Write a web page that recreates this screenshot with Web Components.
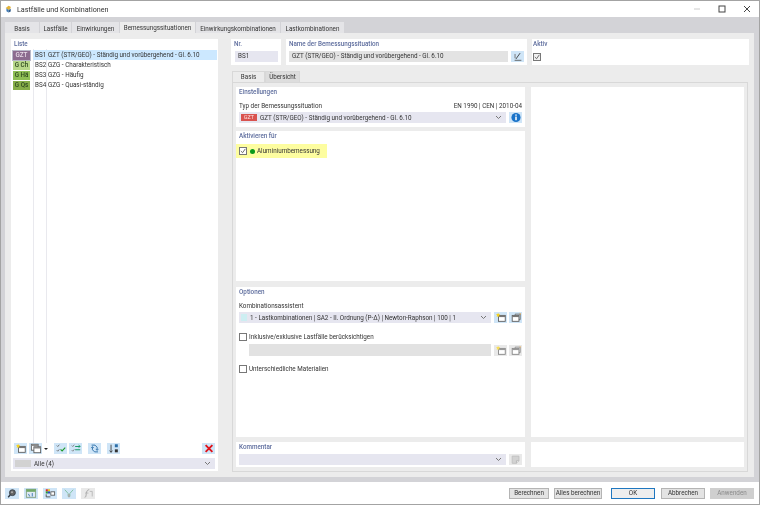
<!DOCTYPE html>
<html>
<head>
<meta charset="utf-8">
<style>
html, body { margin: 0; padding: 0; background: #fff; }
body { font-family: Roboto, "Open Sans", sans-serif; font-size: 6.3px; color: #333; }
</style>
</head>
<body>
<dlg-window></dlg-window>
<script>
// small helper, every element gets its own open shadow root
function def(name, css, html, init) {
  class El extends HTMLElement {
    constructor() {
      super();
      this.attachShadow({mode: 'open'});
      this.shadowRoot.innerHTML = '<style>' + css + '</style>' + html(this);
      if (init) init(this);
    }
  }
  customElements.define(name, El);
}

const ICONS = {
  newcase: '<rect x="4" y="4" width="8" height="7" fill="#fff" stroke="#555"/><rect x="4" y="4" width="8" height="2" fill="#777"/><path d="M3.5 .8l.8 1.7 1.7.3-1.3 1.2.4 1.8-1.6-.9-1.6.9.4-1.8L1.3 2.800l1.700-.3z" fill="#f6d21f"/>',
  copy: '<rect x="1.500" y="1.500" width="8" height="7" fill="#fff" stroke="#555"/><rect x="1.500" y="1.500" width="8" height="2" fill="#888"/><rect x="4.500" y="4.500" width="8" height="7" fill="#fff" stroke="#555"/><rect x="4.500" y="4.500" width="8" height="2" fill="#888"/>',
  newcopy: '<rect x="2.500" y="4" width="8" height="7" fill="#fff" stroke="#555"/><rect x="2.500" y="4" width="8" height="2" fill="#777"/><path d="M6 4V2.500h6V9h-1.500" fill="none" stroke="#666"/><path d="M11.500 .5l.5 1 1 .3-.8.7.2 1-.9-.5" fill="#e8a33a"/>',
  checks: '<path d="M2 3l1.200 1.200L5 2M2 8.500l1.200 1.200L5 7.500" fill="none" stroke="#666"/><path d="M6.500 7.500l1.800 1.800L12 5.500" fill="none" stroke="#1d9a2b" stroke-width="1.300"/>',
  swap: '<path d="M2 3l1.200 1.200L5 2M2 8.500l1.200 1.200L5 7.500" fill="none" stroke="#777"/><path d="M6 4h6M6 8h6" stroke="#1d9a6b" stroke-width="1.200"/><path d="M10 2.500l2 1.500-2 1.500" fill="none" stroke="#1d9a6b"/>',
  cycle: '<path d="M3 2.500h4l2.500 2.500v3M10.500 10.500h-4L4 8V5" fill="none" stroke="#2b6ea8" stroke-width="1.100"/><path d="M8 7l1.500 1.800L11 7M2.500 6L4 4.200 5.500 6" fill="none" stroke="#2b6ea8"/>',
  sort: '<path d="M3.500 2v9M1.800 9l1.700 2 1.700-2" fill="none" stroke="#333"/><rect x="8" y="1.500" width="3.500" height="3.500" fill="#2b6ea8"/><rect x="8" y="7.500" width="3.500" height="3.500" fill="#333"/>',
  del: '<path d="M3 2.500l8 8M11 2.500l-8 8" stroke="#e0131a" stroke-width="2.200"/>',
  edit: '<path d="M3 11h8" stroke="#555"/><path d="M4.500 9.500L9.500 2.500" stroke="#444" stroke-width="1.100"/><path d="M3.500 3.500v5" stroke="#666"/>',
  info: '<circle cx="7" cy="6.500" r="5.400" fill="#1a73c9"/><rect x="6.100" y="5.400" width="1.800" height="4.300" fill="#fff"/><rect x="6.100" y="2.900" width="1.800" height="1.500" fill="#fff"/>',
  note: '<path d="M2.500 2.500h8v5.500l-3 3h-5z" fill="#c4c4c4" stroke="#aaa"/><path d="M7.500 11V8h3" fill="#eee" stroke="#999"/>',
  search: '<circle cx="7.500" cy="5.500" r="3.500" fill="#666" stroke="#2f3a45"/><path d="M5 8l-2.500 3" stroke="#2f3a45" stroke-width="1.600"/><path d="M7 4v2" stroke="#fff"/>',
  table: '<rect x="1.500" y="1.500" width="11" height="9.500" fill="#dfe9f5" stroke="#7d9c7a"/><rect x="1.500" y="1.500" width="11" height="3" fill="#72a868"/><path d="M4 7l1.500 3M8.500 6v4" stroke="#2b6ea8"/>',
  colors: '<rect x="2" y="1.500" width="2.500" height="2.500" fill="#e0262c"/><rect x="4.500" y="1.500" width="2.500" height="2.500" fill="#e6c51d"/><rect x="2" y="4" width="2.500" height="2.500" fill="#2b9a3a"/><rect x="4.500" y="4" width="2.500" height="2.500" fill="#2b4fc0"/><rect x="8" y="4.500" width="4.500" height="4" fill="#fff" stroke="#555"/><path d="M2.500 7.500v3h5" fill="none" stroke="#444"/>',
  filter: '<path d="M2 2l4 4.500V10h2V6.500L12 2" fill="none" stroke="#7fbfa0" stroke-width="1.100"/><path d="M7 7v4" stroke="#aaa" stroke-width="2"/>',
  formula: '<path d="M3 11c2 0 1.500-2 2-4.500S6 2 8.500 2" fill="none" stroke="#8a8a8a" stroke-width="1.100"/><path d="M3.500 6h4M9 4h3v6" fill="none" stroke="#9a9a9a"/>',
  logo: '<path d="M1 5l4-3 3 1.500v2L5 8z" fill="#e2b33a"/><path d="M2 5.500l3 2.500v3.500L2 9.500z" fill="#3c79b6"/><path d="M5 8l3-2v4l-3 1.500z" fill="#2c5a8a"/>'
};

def('ui-icon', ':host{display:inline-flex;width:14px;height:13px}svg{width:100%;height:100%;display:block}',
  el => '<svg viewBox="0 0 14 13">' + (ICONS[el.getAttribute('name')] || '') + '</svg>');

def('icon-btn', `
  :host{display:flex;align-items:center;justify-content:center;width:13px;height:11px;background:#cfe5f7;flex:none}
  :host([off]){background:#e2e2e2;opacity:.75}
  ui-icon{width:12px;height:11px}`,
  el => '<ui-icon name="' + el.getAttribute('name') + '"></ui-icon>');

def('check-box', `
  :host{display:inline-block;width:6px;height:6px;border:1px solid #777;background:#fff;flex:none}
  svg{display:block;width:6px;height:6px}`,
  el => el.hasAttribute('on') ? '<svg viewBox="0 0 7 7"><path d="M1 3.500l2 2L6.200 1" fill="none" stroke="#444" stroke-width=".9"/></svg>' : '');

def('combo-box', `
  :host{display:flex;align-items:center;height:11px;background:#e6e6f0;flex:1;min-width:0;padding:0 3px 0 2px;gap:3px;overflow:hidden;white-space:nowrap}
  .t{flex:1;overflow:hidden}
  svg{width:7px;height:5px;flex:none;margin-right:1px}`,
  () => '<slot name="lead"></slot><span class="t"><slot></slot></span><svg viewBox="0 0 7 5"><path d="M1 1l2.500 2.500L6 1" fill="none" stroke="#777"/></svg>');

def('group-card', `
  :host{display:block;background:#fff;box-sizing:border-box;padding:0 3px;overflow:hidden}
  .h{height:10px;line-height:10px;color:#5f6e9e;font-weight:500}
  `,
  el => '<div class="h">' + (el.getAttribute('label') || '') + '</div><slot></slot>');

def('dlg-button', `
  :host{display:flex;align-items:center;justify-content:center;height:11px;width:40px;box-sizing:border-box;background:#e3e3e3;border:1px solid #b4b4b4;color:#333;white-space:nowrap}
  :host([def]){border:1px solid #1f77c0;background:#eeeeee;width:44px}
  :host([off]){background:#cfcfcf;border-color:#cfcfcf;color:#8a8a8a}`,
  () => '<slot></slot>');

def('outer-tab', `
  :host{display:flex;align-items:center;justify-content:center;height:11px;padding-top:2px;background:#e4e4e7;box-sizing:border-box;color:#333;white-space:nowrap}
  :host([on]){height:11px;background:#ececec;padding-top:1px}`,
  () => '<slot></slot>');

def('title-bar', `
  :host{display:flex;align-items:center;height:16px;background:#fff;flex:none;padding-left:4px;color:#333;font-size:7.200px}
  ui-icon{width:10px;height:10px;margin-right:2px}
  .t{flex:1}
  .c{display:flex;width:25px;justify-content:center}
  svg{width:8px;height:8px;display:block}
  `,
  () => `<ui-icon name="logo"></ui-icon><span class="t">Lastfälle und Kombinationen</span>
  <span class="c"><svg viewBox="0 0 8 8"><path d="M1 4h6" stroke="#ccc"/></svg></span>
  <span class="c"><svg viewBox="0 0 8 8"><rect x="1" y="1" width="6" height="6" fill="none" stroke="#444"/></svg></span>
  <span class="c"><svg viewBox="0 0 8 8"><path d="M1 1l6 6M7 1L1 7" stroke="#444"/></svg></span>`);

def('list-row', `
  :host{display:flex;align-items:center;height:10px;white-space:nowrap}
  .b{width:17px;height:9px;line-height:9px;text-align:center;margin:0 3px 0 1px;flex:none;font-weight:500;color:#2f4a1f}
  .n{width:13px;flex:none;box-sizing:border-box;padding-left:2px;line-height:10px}
  .l{flex:1;height:10px;line-height:10px;padding-left:2px}
  :host([sel]) .l, :host([sel]) .n{background:#cce8ff}
  :host([sel]) .b{outline:1px solid #b9b9c9;color:#e8dce8}`,
  el => `<span class="b" style="background:${el.getAttribute('c')}">${el.getAttribute('b')}</span><span class="n">${el.getAttribute('n')}</span><span class="l"><slot></slot></span>`);

def('side-list', `
  :host{display:flex;flex-direction:column;width:207px;background:#fff;flex:none;box-sizing:border-box;margin-bottom:1px}
  .h{height:10px;line-height:10px;padding-left:3px;color:#5f6e9e;font-weight:500}
  .rows{flex:1;padding:1px 1px 0 1px;background:
    linear-gradient(#e9e9ee,#e9e9ee) 22px 0/1px 100% no-repeat,
    linear-gradient(#e9e9ee,#e9e9ee) 35px 0/1px 100% no-repeat}
  .tools{display:flex;align-items:center;height:11px;padding:0 3px;margin-bottom:4px}
  .arr{width:0;height:0;border:2px solid transparent;border-top:2.500px solid #222;border-bottom:0;margin:0 6px 0 2px}
  .combo{display:flex;padding:0 3px 2px 2px;height:11px}
  .sw{width:16px;height:7px;background:#d2d2d2;display:block}
  `,
  () => `<div class="h">Liste</div>
  <div class="rows">
    <list-row sel b="GZT" n="BS1" c="#8c6c8f">GZT (STR/GEO) - Ständig und vorübergehend - Gl. 6.10</list-row>
    <list-row b="G Ch" n="BS2" c="#b8d88a">GZG - Charakteristisch</list-row>
    <list-row b="G Hä" n="BS3" c="#8fbf55">GZG - Häufig</list-row>
    <list-row b="G Qs" n="BS4" c="#86ad48">GZG - Quasi-ständig</list-row>
  </div>
  <div class="tools">
    <icon-btn name="newcase" style="margin-right:2px"></icon-btn>
    <icon-btn name="copy"></icon-btn><span class="arr"></span>
    <icon-btn name="checks" style="margin-right:2px"></icon-btn>
    <icon-btn name="swap" style="margin-right:6px"></icon-btn>
    <icon-btn name="cycle" style="margin-right:6px"></icon-btn>
    <icon-btn name="sort"></icon-btn>
    <span style="flex:1"></span>
    <icon-btn name="del"></icon-btn>
  </div>
  <div class="combo"><combo-box><span class="sw" slot="lead"></span>Alle (4)</combo-box></div>`);

def('basis-pane', `
  :host{display:grid;grid-template-columns:289px 213px;column-gap:6px;height:380px;grid-template-rows:1fr}
  .col{display:flex;flex-direction:column}
  .w{background:#fff}
  .row{display:flex;align-items:center}
  .sub{height:10px;line-height:10px}
  .hl{display:flex;align-items:center;gap:3px;background:#fdfda0;height:14px;width:91px;margin:3px 0 0 -3px;padding-left:3px;box-sizing:border-box}
  .dot{width:5px;height:5px;border-radius:50%;background:#0a9a1a;margin:0 -1px 0 0;flex:none}
  .badge{background:#d9534f;color:#fbdede;width:16px;height:7px;line-height:7px;text-align:center;font-size:5.500px;flex:none;display:block}
  .lk{display:block;width:6px;height:7px;background:#cdeef2;flex:none}
  .g{flex:1;height:12px;background:#e2e2e2}
  `,
  () => `<div class="col">
    <group-card label="Einstellungen" style="height:40px">
      <div class="row sub" style="margin-top:4px;justify-content:space-between"><span>Typ der Bemessungssituation</span><span>EN 1990 | CEN | 2010-04</span></div>
      <div class="row" style="gap:3px;margin-top:1px">
        <combo-box><span class="badge" slot="lead">GZT</span>GZT (STR/GEO) - Ständig und vorübergehend - Gl. 6.10</combo-box>
        <icon-btn name="info"></icon-btn>
      </div>
    </group-card>
    <group-card label="Aktivieren für" style="height:150px;margin-top:4px">
      <div class="hl"><check-box on></check-box><span class="dot"></span><span>Aluminiumbemessung</span></div>
    </group-card>
    <group-card label="Optionen" style="height:150px;margin-top:6px">
      <div class="sub" style="margin-top:4px">Kombinationsassistent</div>
      <div class="row" style="gap:3px;margin-top:1px">
        <combo-box><span class="lk" slot="lead"></span>1 - Lastkombinationen | SA2 - II. Ordnung (P-Δ) | Newton-Raphson | 100 | 1</combo-box>
        <icon-btn name="newcase"></icon-btn><icon-btn name="newcopy" style="margin-left:-1px"></icon-btn>
      </div>
      <div class="row" style="gap:2px;margin-top:9px;height:10px"><check-box></check-box><span>Inklusive/exklusive Lastfälle berücksichtigen</span></div>
      <div class="row" style="gap:3px;margin:2px 0 0 10px">
        <span class="g"></span><icon-btn off name="newcase"></icon-btn><icon-btn off name="newcopy" style="margin-left:-1px"></icon-btn>
      </div>
      <div class="row" style="gap:2px;margin-top:8px;height:10px"><check-box></check-box><span>Unterschiedliche Materialien</span></div>
    </group-card>
    <group-card label="Kommentar" style="height:25px;margin-top:5px">
      <div class="row" style="gap:3px;margin-top:2px"><combo-box></combo-box><icon-btn off name="note"></icon-btn></div>
    </group-card>
  </div>
  <div class="col"><div class="w" style="height:350px"></div><div class="w" style="height:25px;margin-top:5px"></div></div>`);

def('main-pane', `
  :host{display:flex;flex-direction:column;flex:1;min-width:0}
  .top{display:flex;gap:5px;height:26px;flex:none}
  .in{height:11px;line-height:11px;padding-left:3px;box-sizing:border-box;margin-top:2px}
  .r{display:flex;gap:3px;margin-top:2px}
  .tabs{display:flex;height:11px;margin:6px 0 0 1px;flex:none}
  .tabs span{display:flex;align-items:center;justify-content:center;box-sizing:border-box;height:11px;border:1px solid #d8d8d8;border-bottom:0}
  .tabs .on{width:33px;background:#ececec}
  .tabs .off{width:35px;background:#dddddd}
  .panel{border:1px solid #d8d8d8;margin-left:1px;padding:4px 3px;width:516px;box-sizing:border-box;height:390px;flex:none}
  `,
  () => `<div class="top">
    <group-card label="Nr." style="width:50px"><div class="in" style="background:#e6e6f0;width:43px;margin-left:1px">BS1</div></group-card>
    <group-card label="Name der Bemessungssituation" style="width:241px">
      <div class="r"><div class="in" style="background:#e3e3e3;flex:1;margin:0">GZT (STR/GEO) - Ständig und vorübergehend - Gl. 6.10</div><icon-btn name="edit"></icon-btn></div>
    </group-card>
    <group-card label="Aktiv" style="width:217px;padding-left:1px"><check-box on style="margin-top:4px;background:#f0f0f0"></check-box></group-card>
  </div>
  <div class="tabs"><span class="on">Basis</span><span class="off">Übersicht</span></div>
  <div class="panel"><basis-pane></basis-pane></div>`);

def('tab-strip', `
  :host{display:flex;align-items:flex-end;height:16px;flex:none;gap:1px}
  `,
  () => `<outer-tab style="width:34px">Basis</outer-tab>
  <outer-tab style="width:31px">Lastfälle</outer-tab>
  <outer-tab style="width:47px">Einwirkungen</outer-tab>
  <outer-tab on style="width:75px">Bemessungssituationen</outer-tab>
  <outer-tab style="width:84px">Einwirkungskombinationen</outer-tab>
  <outer-tab style="width:63px">Lastkombinationen</outer-tab>`);

def('dlg-footer', `
  :host{display:flex;align-items:center;height:22px;flex:none;padding:0 5px 0 4px}
  .ic{display:flex;gap:5px}
  .b{display:flex;margin-left:auto;gap:5px}
  `,
  () => `<div class="ic">
    <icon-btn name="search" style="width:14px"></icon-btn><icon-btn name="table" style="width:14px"></icon-btn><icon-btn name="colors" style="width:14px"></icon-btn><icon-btn name="filter" style="width:14px"></icon-btn><icon-btn off name="formula" style="width:14px"></icon-btn>
  </div>
  <div class="b">
    <dlg-button>Berechnen</dlg-button><dlg-button style="width:48px">Alles berechnen</dlg-button>
    <dlg-button def style="margin:0 1px 0 4px">OK</dlg-button><dlg-button style="width:44px">Abbrechen</dlg-button><dlg-button off style="width:44px">Anwenden</dlg-button>
  </div>`);

def('dlg-window', `
  :host{display:flex;flex-direction:column;width:760px;height:505px;box-sizing:border-box;border:1px solid #a3a3a3;background:#fff;overflow:hidden;filter:blur(.25px)}
  .mid{display:flex;flex-direction:column;background:#d3d3d7;padding:0 5px 5px 4px;height:465px;box-sizing:border-box;flex:none}
  .body{flex:1;display:flex;background:#ececec;padding:6px 0 5px 6px;gap:13px;min-height:0}
  `,
  () => `<title-bar></title-bar>
  <div class="mid">
    <tab-strip></tab-strip>
    <div class="body"><side-list></side-list><main-pane></main-pane></div>
  </div>
  <dlg-footer></dlg-footer>`);
</script>
</body>
</html>
